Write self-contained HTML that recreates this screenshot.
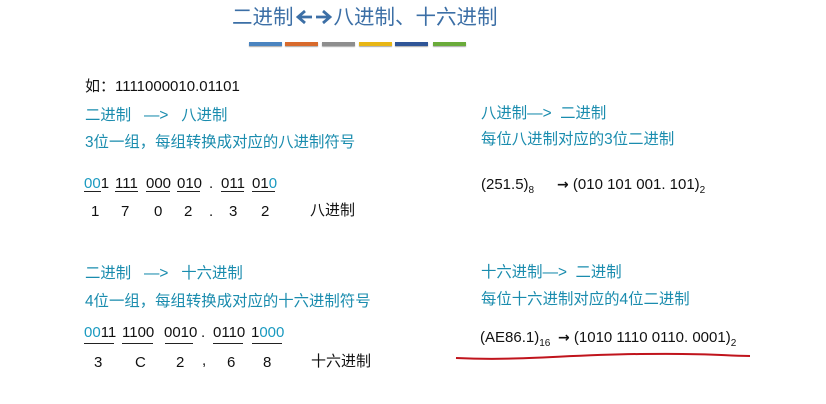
<!DOCTYPE html>
<html><head><meta charset="utf-8"><style>
body{margin:0;width:826px;height:404px;background:#fff;overflow:hidden;position:relative;font-family:"Liberation Sans","Noto Sans CJK SC",sans-serif;}
.t{position:absolute;white-space:nowrap;line-height:1;color:#111;font-size:15px}
.c{color:#1a8cae;font-size:15.4px}
.u{position:absolute;height:1px;background:#222}
.b{color:#1a9ac0}
.bar{position:absolute;top:42px;height:4px;width:33px;box-shadow:0 1px 1px #aaa}
sub{font-size:10px;vertical-align:-4px}
.ar{font-family:"DejaVu Sans",sans-serif;font-weight:bold;font-size:14px}
</style></head><body>
<div class="t" style="left:232px;top:8px;font-size:20.5px;color:#3c6fa6">二进制<svg width="38" height="18" style="vertical-align:-2px;margin:0 1px"><path d="M3 9H17M10 3L3 9L10 15M21 9H35M28 3L35 9L28 15" stroke="#3c6fa6" stroke-width="2.8" fill="none"/></svg>八进制、十六进制</div>
<div class="bar" style="left:249px;background:#4a84c0"></div>
<div class="bar" style="left:285px;background:#d86a2c"></div>
<div class="bar" style="left:322px;background:#8e8e8e"></div>
<div class="bar" style="left:359px;background:#e8b614"></div>
<div class="bar" style="left:395px;background:#2f5597"></div>
<div class="bar" style="left:433px;background:#6aab3a"></div>

<div class="t" style="left:85px;top:79px">如：1111000010.01101</div>
<div class="t c" style="left:85px;top:108px">二进制&nbsp;&nbsp; —&gt;&nbsp;&nbsp; 八进制</div>
<div class="t c" style="left:85px;top:135px">3位一组，每组转换成对应的八进制符号</div>

<div class="t" style="left:84px;top:176px"><span class="b">00</span>1</div>
<div class="t" style="left:115px;top:176px">111</div>
<div class="t" style="left:146px;top:176px">000</div>
<div class="t" style="left:177px;top:176px">010</div>
<div class="t" style="left:209px;top:176px">.</div>
<div class="t" style="left:221px;top:176px">011</div>
<div class="t" style="left:252px;top:176px">01<span class="b">0</span></div>
<div class="u" style="left:84px;top:191px;width:17px"></div>
<div class="u" style="left:115px;top:191px;width:23px"></div>
<div class="u" style="left:146px;top:191px;width:24px"></div>
<div class="u" style="left:177px;top:191px;width:23px"></div>
<div class="u" style="left:221px;top:191px;width:23px"></div>
<div class="u" style="left:252px;top:191px;width:23px"></div>
<div class="t" style="left:91px;top:204px">1</div>
<div class="t" style="left:121px;top:204px">7</div>
<div class="t" style="left:154px;top:204px">0</div>
<div class="t" style="left:184px;top:204px">2</div>
<div class="t" style="left:209px;top:204px">.</div>
<div class="t" style="left:229px;top:204px">3</div>
<div class="t" style="left:261px;top:204px">2</div>
<div class="t" style="left:310px;top:203px;font-size:15px">八进制</div>

<div class="t c" style="left:85px;top:266px">二进制&nbsp;&nbsp; —&gt;&nbsp;&nbsp; 十六进制</div>
<div class="t c" style="left:85px;top:294px">4位一组，每组转换成对应的十六进制符号</div>

<div class="t" style="left:84px;top:325px"><span class="b">00</span>11</div>
<div class="t" style="left:122px;top:325px">1100</div>
<div class="t" style="left:164px;top:325px">0010</div>
<div class="t" style="left:201px;top:325px">.</div>
<div class="t" style="left:213px;top:325px">0110</div>
<div class="t" style="left:251px;top:325px">1<span class="b">000</span></div>
<div class="u" style="left:84px;top:343px;width:30px"></div>
<div class="u" style="left:122px;top:343px;width:31px"></div>
<div class="u" style="left:165px;top:343px;width:28px"></div>
<div class="u" style="left:213px;top:343px;width:30px"></div>
<div class="u" style="left:252px;top:343px;width:30px"></div>
<div class="t" style="left:94px;top:355px">3</div>
<div class="t" style="left:135px;top:355px">C</div>
<div class="t" style="left:176px;top:355px">2</div>
<div class="t" style="left:202px;top:353px">,</div>
<div class="t" style="left:227px;top:355px">6</div>
<div class="t" style="left:263px;top:355px">8</div>
<div class="t" style="left:311px;top:354px;font-size:15px">十六进制</div>

<div class="t c" style="left:481px;top:106px">八进制—&gt;&nbsp; 二进制</div>
<div class="t c" style="left:481px;top:132px">每位八进制对应的3位二进制</div>
<div class="t" style="left:481px;top:177px">(251.5)<sub>8</sub></div>
<div class="t" style="left:557px;top:177px"><span class="ar">→</span> (010 101 001. 101)<sub>2</sub></div>

<div class="t c" style="left:481px;top:265px">十六进制—&gt;&nbsp; 二进制</div>
<div class="t c" style="left:481px;top:292px">每位十六进制对应的4位二进制</div>
<div class="t" style="left:480px;top:330px">(AE86.1)<sub>16</sub></div>
<div class="t" style="left:558px;top:330px"><span class="ar">→</span> (1010 1110 0110. 0001)<sub>2</sub></div>
<svg style="position:absolute;left:0;top:0" width="826" height="404"><path d="M456 358 C520 361 560 355 640 354 S720 356 750 356" stroke="#c0141c" stroke-width="2" fill="none"/></svg>
</body></html>
